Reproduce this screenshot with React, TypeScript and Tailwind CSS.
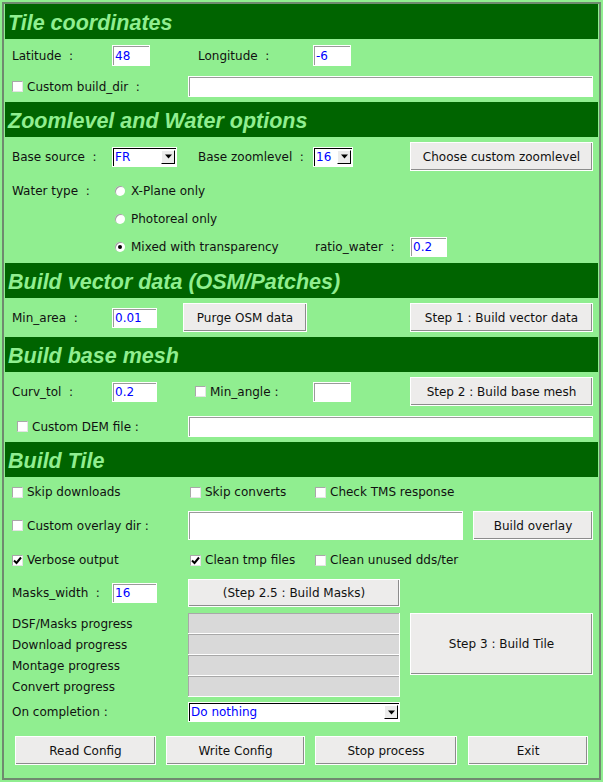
import type { ReactNode } from "react";

// Tk-style widgets on a light green panel

function Header({ title }: { title: string }) {
  return (
    <div className="h-[35px] shrink-0 bg-[#006400] pl-[3px] pt-[4px] flex items-center">
      <span className="font-['Liberation_Sans',Arial,sans-serif] text-[21.5px] font-bold italic leading-none text-[#90ee90]">
        {title}
      </span>
    </div>
  );
}

function Label({ text, className = "" }: { text: string; className?: string }) {
  return <span className={`shrink-0 whitespace-pre ${className}`}>{text}</span>;
}

function Entry({ value = "", className = "" }: { value?: string; className?: string }) {
  return (
    <div
      className={`shrink-0 bg-white border border-white shadow-[inset_1px_1px_0_#9a9a9a] flex items-center pl-[2px] text-[#0000ff] ${className}`}
    >
      {value}
    </div>
  );
}

function Button({ label, className = "" }: { label: string; className?: string }) {
  return (
    <div
      className={`shrink-0 bg-[#edeceb] border border-white shadow-[inset_-1px_-1px_0_#8c8c8c] flex items-center justify-center ${className}`}
    >
      {label}
    </div>
  );
}

function Check({ checked = false }: { checked?: boolean }) {
  return (
    <span className="w-[11px] h-[11px] shrink-0 bg-white border border-t-[#a8a8a8] border-l-[#a8a8a8] border-b-[#e4e4e4] border-r-[#e4e4e4] flex items-center justify-center">
      {checked && (
        <svg width="9" height="9" viewBox="0 0 9 9">
          <path d="M1 4.5 L3.5 7 L8 1.5" fill="none" stroke="#000" strokeWidth="2" />
        </svg>
      )}
    </span>
  );
}

function Radio({ selected = false }: { selected?: boolean }) {
  return (
    <span className="w-[10px] h-[10px] shrink-0 rounded-full bg-white shadow-[inset_1px_1px_0_#a0a0a0] flex items-center justify-center">
      {selected && <span className="w-[4px] h-[4px] rounded-full bg-black" />}
    </span>
  );
}

function Combo({ value, className = "" }: { value: string; className?: string }) {
  return (
    <div
      className={`shrink-0 h-[20px] bg-white border border-white shadow-[inset_1px_1px_0_#000] flex items-center pl-[2px] ${className}`}
    >
      <span className="flex-1 text-[#0000ff]">{value}</span>
      <span className="w-[14px] h-[14px] mr-[1px] bg-[#ececec] border border-t-white border-l-white border-b-black border-r-black flex items-center justify-center">
        <svg width="7" height="5" viewBox="0 0 7 5">
          <path d="M0 0.5 H7 L3.5 4.5 Z" fill="#000" />
        </svg>
      </span>
    </div>
  );
}

function CheckLabel({ text, checked, className = "" }: { text: string; checked?: boolean; className?: string }) {
  return (
    <div className={`shrink-0 flex items-center ${className}`}>
      <Check checked={checked} />
      <span className="ml-[4px] whitespace-pre">{text}</span>
    </div>
  );
}

function Row({ children, className = "" }: { children: ReactNode; className?: string }) {
  return <div className={`flex items-center ${className}`}>{children}</div>;
}

function ProgressBar() {
  return <div className="h-[21px] bg-[#d9d9d9] border-b border-r border-white shadow-[inset_1px_1px_0_#a8a8a8]" />;
}

export default function App() {
  const progress = ["DSF/Masks progress", "Download progress", "Montage progress", "Convert progress"];

  return (
    <div className="w-[603px] h-[782px] bg-[#90ee90] p-[2px] font-['DejaVu_Sans',sans-serif] text-[12px] text-[#111]">
      <div className="h-full border-2 border-[#6f8a6f] px-[1px] flex flex-col">
        <Header title="Tile coordinates" />
        <div className="pl-[7px] pr-[4px] pt-[6px] pb-[5px] flex flex-col gap-[10px]">
          <Row className="h-[21px]">
            <Label text="Latitude  :" className="w-[100px]" />
            <Entry value="48" className="w-[38px] h-[21px]" />
            <Label text="Longitude  :" className="ml-[48px] w-[115px]" />
            <Entry value="-6" className="w-[38px] h-[21px]" />
          </Row>
          <Row className="h-[21px]">
            <CheckLabel text="Custom build_dir  :" className="w-[176px]" />
            <Entry className="w-[405px] h-[21px]" />
          </Row>
        </div>

        <Header title="Zoomlevel and Water options" />
        <div className="pl-[7px] pr-[4px] pt-[5px] pb-[2px] flex flex-col">
          <Row className="h-[29px]">
            <Label text="Base source  :" className="w-[100px]" />
            <Combo value="FR" className="w-[65px]" />
            <Label text="Base zoomlevel  :" className="ml-[21px] w-[115px]" />
            <Combo value="16" className="w-[40px]" />
            <Button label="Choose custom zoomlevel" className="ml-[57px] w-[183px] h-[29px]" />
          </Row>
          <Row className="h-[28px] mt-[6px]">
            <Label text="Water type  :" className="w-[103px]" />
            <Radio />
            <span className="ml-[6px]">X-Plane only</span>
          </Row>
          <Row className="h-[28px]">
            <span className="w-[103px] shrink-0" />
            <Radio />
            <span className="ml-[6px]">Photoreal only</span>
          </Row>
          <Row className="h-[28px]">
            <span className="w-[103px] shrink-0" />
            <Radio selected />
            <Label text="Mixed with transparency" className="ml-[6px] w-[184px]" />
            <Label text="ratio_water  :" className="w-[95px]" />
            <Entry value="0.2" className="w-[37px] h-[20px]" />
          </Row>
        </div>

        <Header title="Build vector data (OSM/Patches)" />
        <div className="pl-[7px] pr-[4px] pt-[5px] pb-[5px]">
          <Row className="h-[29px]">
            <Label text="Min_area  :" className="w-[100px]" />
            <Entry value="0.01" className="w-[45px] h-[20px]" />
            <Button label="Purge OSM data" className="ml-[26px] w-[124px] h-[29px]" />
            <Button label="Step 1 : Build vector data" className="ml-[103px] w-[183px] h-[29px]" />
          </Row>
        </div>

        <Header title="Build base mesh" />
        <div className="pl-[7px] pr-[4px] pt-[5px] pb-[5px] flex flex-col gap-[10px]">
          <Row className="h-[29px]">
            <Label text="Curv_tol  :" className="w-[100px]" />
            <Entry value="0.2" className="w-[45px] h-[20px]" />
            <CheckLabel text="Min_angle :" className="ml-[38px] w-[118px]" />
            <Entry className="w-[38px] h-[20px]" />
            <Button label="Step 2 : Build base mesh" className="ml-[59px] w-[183px] h-[29px]" />
          </Row>
          <Row className="h-[21px]">
            <CheckLabel text="Custom DEM file :" className="ml-[5px] w-[171px]" />
            <Entry className="w-[405px] h-[21px]" />
          </Row>
        </div>

        <Header title="Build Tile" />
        <div className="flex-1 pl-[7px] pr-[4px] pt-[5px] flex flex-col">
          <Row className="h-[20px]">
            <CheckLabel text="Skip downloads" className="w-[178px]" />
            <CheckLabel text="Skip converts" className="w-[125px]" />
            <CheckLabel text="Check TMS response" />
          </Row>
          <Row className="h-[29px] mt-[9px]">
            <CheckLabel text="Custom overlay dir :" className="w-[176px]" />
            <Entry className="w-[275px] h-[29px]" />
            <Button label="Build overlay" className="ml-[10px] w-[120px] h-[29px]" />
          </Row>
          <Row className="h-[20px] mt-[10px]">
            <CheckLabel text="Verbose output" checked className="w-[178px]" />
            <CheckLabel text="Clean tmp files" checked className="w-[125px]" />
            <CheckLabel text="Clean unused dds/ter" />
          </Row>
          <Row className="h-[28px] mt-[9px]">
            <Label text="Masks_width  :" className="w-[100px]" />
            <Entry value="16" className="w-[45px] h-[20px]" />
            <Button label="(Step 2.5 : Build Masks)" className="ml-[31px] w-[212px] h-[28px]" />
          </Row>
          <div className="mt-[6px] flex items-start">
            <div className="w-[176px] shrink-0 flex flex-col">
              {progress.map((p) => (
                <div key={p} className="h-[21px] flex items-center">
                  {p}
                </div>
              ))}
            </div>
            <div className="w-[212px] shrink-0 flex flex-col">
              {progress.map((p) => (
                <ProgressBar key={p} />
              ))}
            </div>
            <Button label="Step 3 : Build Tile" className="ml-[10px] w-[183px] h-[62px]" />
          </div>
          <Row className="h-[20px] mt-[5px]">
            <Label text="On completion :" className="w-[176px]" />
            <Combo value="Do nothing" className="w-[212px]" />
          </Row>
          <Row className="h-[29px] mt-[14px]">
            <Button label="Read Config" className="ml-[3px] w-[141px] h-[29px]" />
            <Button label="Write Config" className="ml-[10px] w-[139px] h-[29px]" />
            <Button label="Stop process" className="ml-[10px] w-[142px] h-[29px]" />
            <Button label="Exit" className="ml-[11px] w-[120px] h-[29px]" />
          </Row>
        </div>
      </div>
    </div>
  );
}
